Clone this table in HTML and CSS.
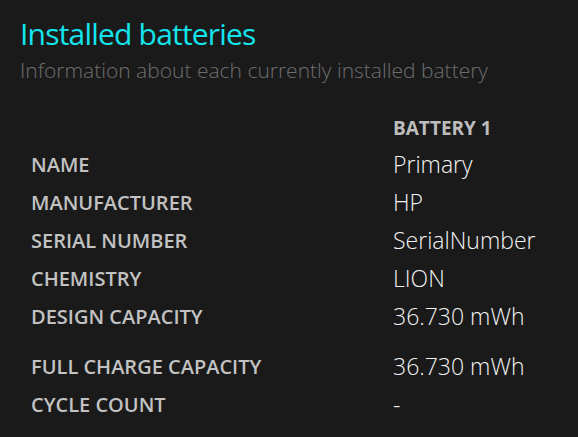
FILE: index.html
```html
<!DOCTYPE html>
<html>
<head>
<meta charset="utf-8">
<link rel="stylesheet" href="styles.css">
</head>
<body>
<div class="page">
  <h1 class="title">Installed batteries</h1>
  <p class="subtitle">Information about each currently installed battery</p>
  <div class="table">
    <div class="row head"><span class="label"></span><span class="col-head">BATTERY 1</span></div>
    <div class="row"><span class="label">NAME</span><span class="value">Primary</span></div>
    <div class="row"><span class="label">MANUFACTURER</span><span class="value">HP</span></div>
    <div class="row"><span class="label">SERIAL NUMBER</span><span class="value">SerialNumber</span></div>
    <div class="row"><span class="label">CHEMISTRY</span><span class="value">LION</span></div>
    <div class="row"><span class="label">DESIGN CAPACITY</span><span class="value">36.730 mWh</span></div>
    <div class="row spaced"><span class="label">FULL CHARGE CAPACITY</span><span class="value">36.730 mWh</span></div>
    <div class="row"><span class="label">CYCLE COUNT</span><span class="value">-</span></div>
  </div>
</div>
</body>
</html>
```
FILE: styles.css
```css
html, body {
  margin: 0;
  padding: 0;
  background: #1a1a1a;
  height: 100%;
}
.page {
  padding: 14px 0 0 20px;
  font-family: "Open Sans", "Noto Sans", sans-serif;
}
.title {
  margin: 0;
  font-size: 30px;
  font-weight: 400;
  line-height: 40px;
  letter-spacing: -0.8px;
  color: #14e4ec;
}
.subtitle {
  margin: 0;
  font-size: 21px;
  font-weight: 300;
  line-height: 32px;
  color: #6e6e6e;
}
.table {
  margin: 25px 0 0 11px;
  display: flex;
  flex-direction: column;
}
.row {
  display: grid;
  grid-template-columns: 362px 1fr;
  height: 38px;
  align-items: center;
}
.row.head {
  height: 34px;
}
.row.spaced {
  margin-top: 12px;
}
.label, .col-head {
  font-size: 20px;
  font-weight: 600;
  color: #c2c2c2;
}
.col-head {
  font-size: 19px;
  font-weight: 700;
  color: #bdbdbd;
}
.value {
  font-size: 23px;
  font-weight: 300;
  color: #f2f2f2;
}
```
